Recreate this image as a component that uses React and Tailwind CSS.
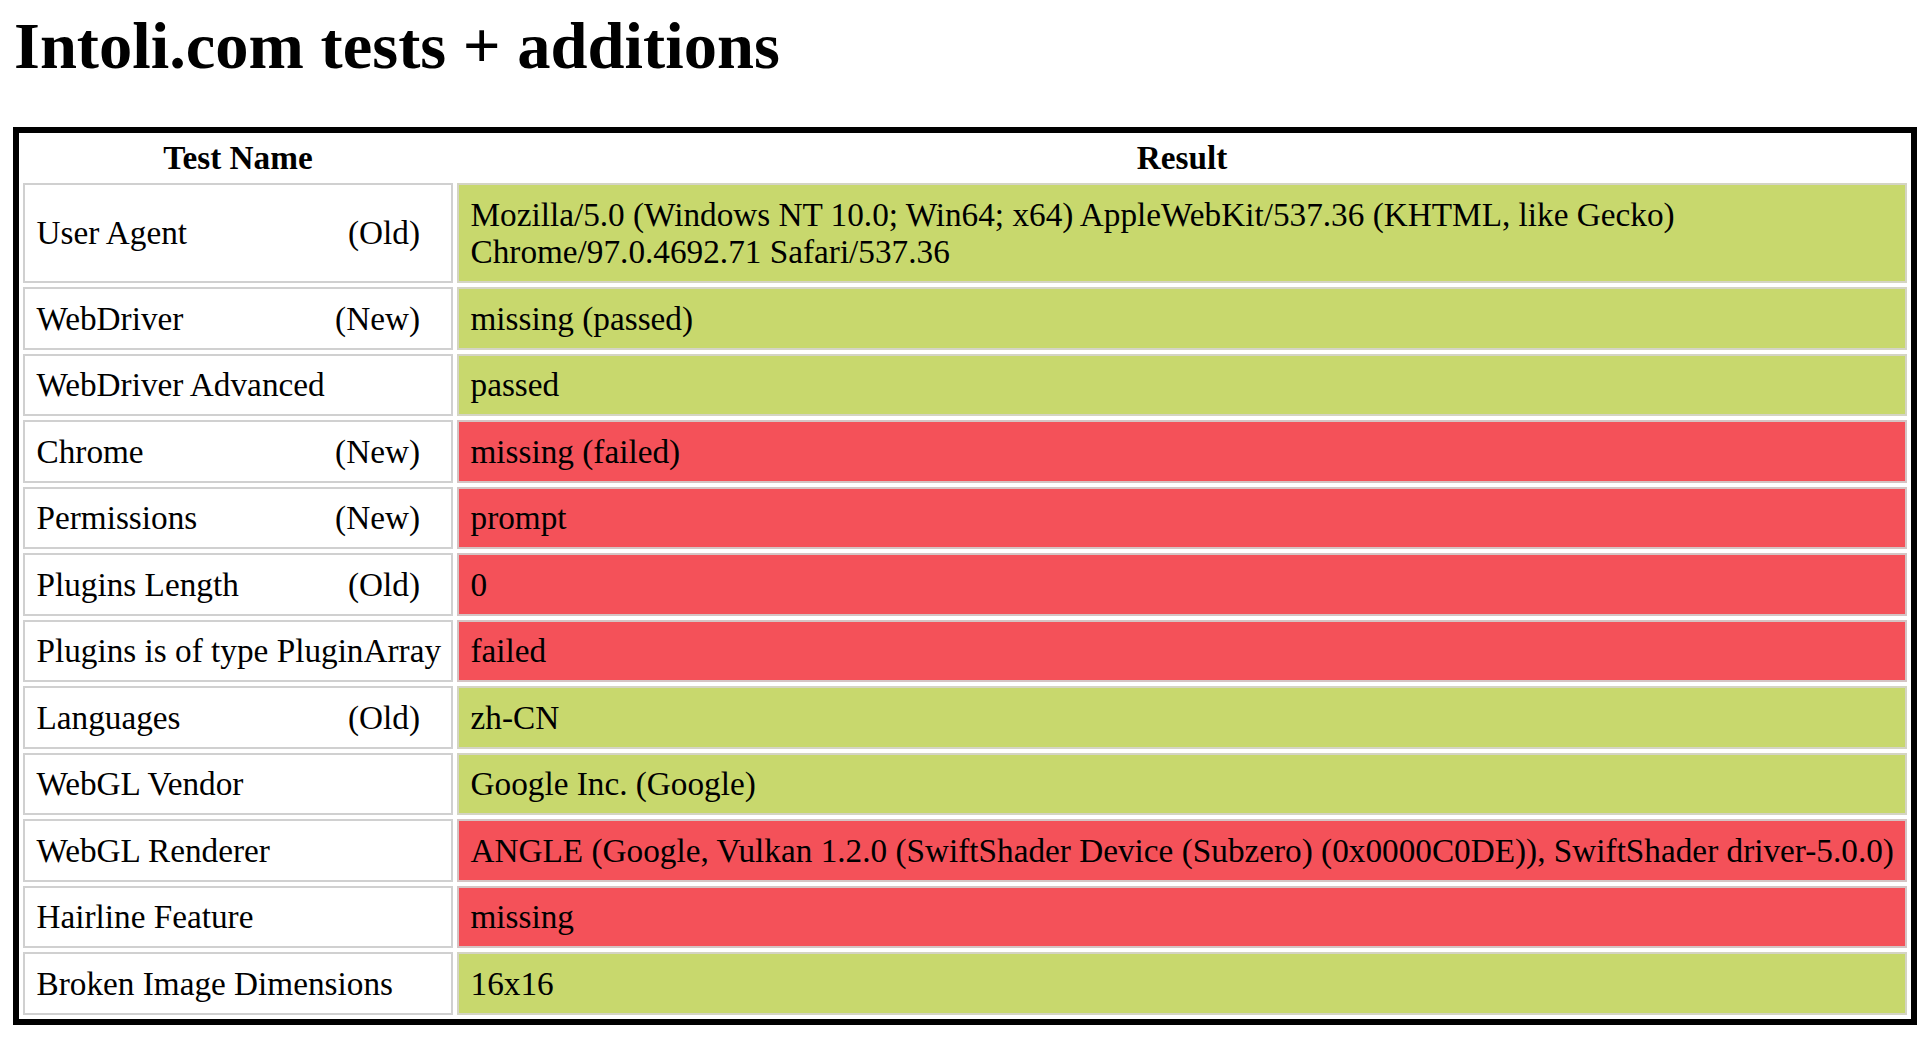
const rows = [
  { name: 'User Agent', age: '(Old)', result: 'Mozilla/5.0 (Windows NT 10.0; Win64; x64) AppleWebKit/537.36 (KHTML, like Gecko) Chrome/97.0.4692.71 Safari/537.36', ok: true },
  { name: 'WebDriver', age: '(New)', result: 'missing (passed)', ok: true },
  { name: 'WebDriver Advanced', age: '', result: 'passed', ok: true },
  { name: 'Chrome', age: '(New)', result: 'missing (failed)', ok: false },
  { name: 'Permissions', age: '(New)', result: 'prompt', ok: false },
  { name: 'Plugins Length', age: '(Old)', result: '0', ok: false },
  { name: 'Plugins is of type PluginArray', age: '', result: 'failed', ok: false },
  { name: 'Languages', age: '(Old)', result: 'zh-CN', ok: true },
  { name: 'WebGL Vendor', age: '', result: 'Google Inc. (Google)', ok: true },
  { name: 'WebGL Renderer', age: '', result: 'ANGLE (Google, Vulkan 1.2.0 (SwiftShader Device (Subzero) (0x0000C0DE)), SwiftShader driver-5.0.0)', ok: false },
  { name: 'Hairline Feature', age: '', result: 'missing', ok: false },
  { name: 'Broken Image Dimensions', age: '', result: '16x16', ok: true },
]

export default function App() {
  return (
    <main className="min-h-screen bg-white px-[13px] pt-[8px] text-black font-['Liberation_Serif','Times_New_Roman',serif]">
      <h1 className="pl-[1px] text-[66.5px] font-bold leading-[76px]">Intoli.com tests + additions</h1>

      <table className="mt-[43px] w-[1904px] table-fixed border-separate border-spacing-[4px] border-[6px] border-black text-[33.25px] leading-[37.5px]">
        <colgroup>
          <col className="w-[430px]" />
          <col className="w-[1450px]" />
        </colgroup>
        <thead>
          <tr>
            <th className="h-[42px] p-0 text-center font-bold">Test Name</th>
            <th className="h-[42px] p-0 text-center font-bold">Result</th>
          </tr>
        </thead>
        <tbody>
          {rows.map((r) => (
            <tr key={r.name}>
              <td className="border-2 border-[#d0d0d0] bg-white pl-[11.5px] pr-[10px] py-[10.5px] align-middle whitespace-nowrap">
                {r.name}
                {r.age && <span className="float-right mr-[21px]">{r.age}</span>}
              </td>
              <td
                className={
                  r.ok
                    ? 'border-2 border-[#d4d4c4] bg-[#c8d86d] pl-[11.5px] pr-[10px] py-[10.5px] align-middle'
                    : 'border-2 border-[#d4c4c4] bg-[#f45159] pl-[11.5px] pr-[10px] py-[10.5px] align-middle'
                }
              >
                {r.result}
              </td>
            </tr>
          ))}
        </tbody>
      </table>
    </main>
  )
}
